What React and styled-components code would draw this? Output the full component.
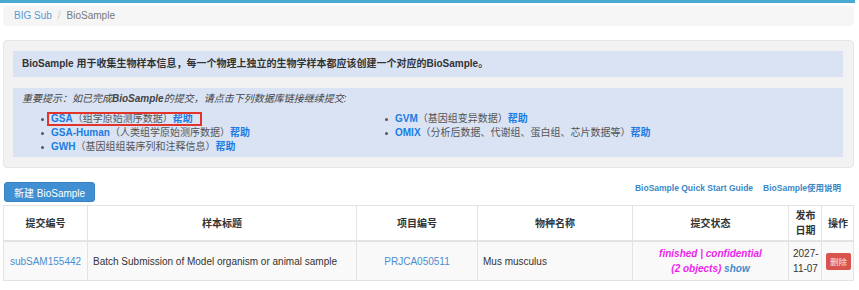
import React from 'react'
import styled, { createGlobalStyle } from 'styled-components'

const GlobalStyle = createGlobalStyle`
    body {
        margin: 0;
        background: #fff;
        color: #333;
        font-family: "Liberation Sans", "Noto Sans CJK SC", sans-serif;
        font-size: 10px;
    }
`

const leftItems = [
    { name: 'GSA', desc: '（组学原始测序数据）', mark: true },
    { name: 'GSA-Human', desc: '（人类组学原始测序数据）' },
    { name: 'GWH', desc: '（基因组组装序列和注释信息）' }
]

const rightItems = [
    { name: 'GVM', desc: '（基因组变异数据）' },
    { name: 'OMIX', desc: '（分析后数据、代谢组、蛋白组、芯片数据等）' }
]

const columns = [
    { title: '提交编号', width: 84 },
    { title: '样本标题', width: 269 },
    { title: '项目编号', width: 121 },
    { title: '物种名称', width: 155 },
    { title: '提交状态', width: 156 },
    { title: '发布日期', width: 33, narrow: true },
    { title: '操作', width: 32, narrow: true }
]

const DbItem = ({ item }) => {
    const content = (
        <>
            <DbName>{item.name}</DbName>
            <DbDesc>{item.desc}</DbDesc>
            <DbName>帮助</DbName>
        </>
    )
    return (
        <Item>
            <Bullet />
            {item.mark ? <Highlight>{content}</Highlight> : content}
        </Item>
    )
}

const App = () => {
    return (
        <>
            <GlobalStyle />
            <TopBar />
            <Container>
                <Breadcrumb>
                    <Crumb href="#">BIG Sub</Crumb>
                    <Divider>/</Divider>
                    <Active>BioSample</Active>
                </Breadcrumb>

                <Well>
                    <InfoBox>
                        <strong>BioSample 用于收集生物样本信息，每一个物理上独立的生物学样本都应该创建一个对应的BioSample。</strong>
                    </InfoBox>
                    <NoticeBox>
                        <Notice>
                            重要提示：如已完成<b>BioSample</b>的提交，请点击下列数据库链接继续提交:
                        </Notice>
                        <Lists>
                            <List>
                                {leftItems.map((item) => (
                                    <DbItem key={item.name} item={item} />
                                ))}
                            </List>
                            <List>
                                {rightItems.map((item) => (
                                    <DbItem key={item.name} item={item} />
                                ))}
                            </List>
                        </Lists>
                    </NoticeBox>
                </Well>

                <ActionRow>
                    <NewButton>新建 BioSample</NewButton>
                    <GuideLinks>
                        <GuideLink href="#">BioSample Quick Start Guide</GuideLink>
                        <GuideLink href="#">BioSample使用说明</GuideLink>
                    </GuideLinks>
                </ActionRow>

                <Table>
                    <colgroup>
                        {columns.map((c) => (
                            <col key={c.title} style={{ width: c.width }} />
                        ))}
                    </colgroup>
                    <thead>
                        <tr>
                            {columns.map((c) => (
                                <Th key={c.title} $narrow={c.narrow}>{c.title}</Th>
                            ))}
                        </tr>
                    </thead>
                    <tbody>
                        <Row>
                            <Td $center><TableLink href="#">subSAM155442</TableLink></Td>
                            <Td>Batch Submission of Model organism or animal sample</Td>
                            <Td $center><TableLink href="#">PRJCA050511</TableLink></Td>
                            <Td>Mus musculus</Td>
                            <Td $center>
                                <Status>finished | confidential</Status>
                                <br />
                                <Status>(2 objects)</Status> <ShowLink href="#">show</ShowLink>
                            </Td>
                            <Td $center $narrow>2027-<wbr />11-07</Td>
                            <Td $center $narrow><DeleteButton>删除</DeleteButton></Td>
                        </Row>
                    </tbody>
                </Table>
            </Container>
        </>
    )
}

export default App

const TopBar = styled.div`
    height: 3px;
    width: 855px;
    background: #4aa9d3;
`

const Container = styled.div`
    width: 851px;
    margin-left: 3px;
`

const Breadcrumb = styled.div`
    margin-top: 3px;
    height: 20px;
    line-height: 20px;
    padding: 0 11px;
    background: #f5f5f5;
    border-radius: 4px;
`

const Crumb = styled.a`
    color: #5b9bd5;
    text-decoration: none;
`

const Divider = styled.span`
    color: #ccc;
    padding: 0 6px;
`

const Active = styled.span`
    color: #777;
`

const Well = styled.div`
    margin-top: 14px;
    padding: 10px 10px 10px 9px;
    background: #f2f2f2;
    border: 1px solid #e6e6e6;
    border-radius: 4px;
    display: flex;
    flex-direction: column;
    gap: 11px;
`

const InfoBox = styled.div`
    height: 26px;
    line-height: 26px;
    padding: 0 9px;
    background: #d9e3f3;
    color: #333;
`

const NoticeBox = styled.div`
    height: 69px;
    box-sizing: border-box;
    padding: 4px 9px 2px;
    background: #d9e3f3;
`

const Notice = styled.div`
    line-height: 14px;
    font-style: italic;
    color: #444;

    b {
        font-weight: 700;
    }
`

const Lists = styled.div`
    display: grid;
    grid-template-columns: 344px 1fr;
    margin-top: 6px;
    padding-left: 19px;
`

const List = styled.ul`
    margin: 0;
    padding: 0;
    list-style: none;
`

const Item = styled.li`
    display: flex;
    align-items: center;
    height: 14px;
    line-height: 14px;
    white-space: nowrap;
`

const Bullet = styled.span`
    width: 3px;
    height: 3px;
    border-radius: 50%;
    background: #555;
    margin-right: 7px;
    flex: none;
`

const Highlight = styled.span`
    display: inline-flex;
    align-items: center;
    height: 10px;
    padding: 0 7px 0 2px;
    margin-left: -2px;
    outline: 2px solid #e2342a;
`

const DbName = styled.a`
    color: #1a7ce3;
    font-weight: 700;
    text-decoration: none;
`

const DbDesc = styled.span`
    color: #555;
`

const ActionRow = styled.div`
    margin-top: 14px;
    display: flex;
    justify-content: space-between;
    align-items: flex-start;
`

const NewButton = styled.button`
    height: 20px;
    margin-left: 1px;
    padding: 0 9px;
    border: 1px solid #3683c6;
    border-radius: 3px;
    background: #3f8fd2;
    color: #fff;
    font-family: inherit;
    font-size: 10px;
`

const GuideLinks = styled.div`
    display: flex;
    gap: 10px;
    margin-right: 13px;
    line-height: 12px;
`

const GuideLink = styled.a`
    color: #3a87c8;
    font-weight: 700;
    font-size: 8.5px;
    text-decoration: none;
`

const Table = styled.table`
    margin-top: 3px;
    width: 850px;
    table-layout: fixed;
    border-collapse: collapse;
    border: 1px solid #e3e3e3;
`

const Th = styled.th`
    padding: ${(p) => (p.$narrow ? '2px 3px 2px 4px' : '2px 5px')};
    line-height: 15px;
    border: 1px solid #e3e3e3;
    border-bottom: 2px solid #e3e3e3;
    text-align: center;
    vertical-align: middle;
    font-weight: 700;
    color: #333;
`

const Row = styled.tr`
    background: #f9f9f9;
`

const Td = styled.td`
    padding: ${(p) => (p.$narrow ? '4px 3px 4px 4px' : '4px 5px')};
    line-height: 15px;
    border: 1px solid #e3e3e3;
    text-align: ${(p) => (p.$center ? 'center' : 'left')};
    vertical-align: middle;
    color: #333;
`

const TableLink = styled.a`
    color: #4a8fd0;
    text-decoration: none;
`

const Status = styled.span`
    color: #ee1fee;
    font-weight: 700;
    font-style: italic;
`

const ShowLink = styled.a`
    color: #428bca;
    font-weight: 700;
    font-style: italic;
    text-decoration: none;
`

const DeleteButton = styled.button`
    width: 25px;
    height: 17px;
    padding: 0;
    border: none;
    border-radius: 2px;
    background: #d9534f;
    color: #fbe3e3;
    font-family: inherit;
    font-size: 8.5px;
`
